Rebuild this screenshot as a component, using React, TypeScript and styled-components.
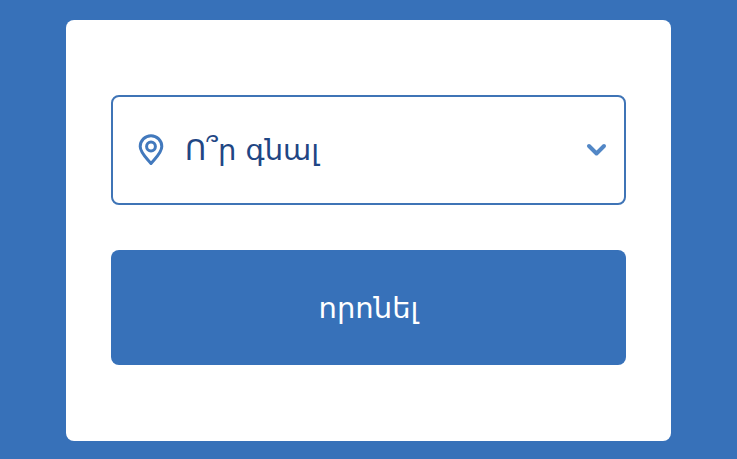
import React from 'react';
import styled, { createGlobalStyle } from 'styled-components';

const GlobalStyle = createGlobalStyle`
  html, body {
    margin: 0;
    padding: 0;
    height: 100%;
    background: #3771b9;
    overflow: hidden;
  }
`;

const Page = styled.main`
  width: 737px;
  height: 459px;
  padding: 20px 66px 18px;
  box-sizing: border-box;
  font-family: 'DejaVu Sans', sans-serif;
`;

const Card = styled.form`
  height: 421px;
  box-sizing: border-box;
  padding: 75px 45px 0;
  background: #fff;
  border-radius: 8px;
  display: grid;
  grid-template-rows: 110px 115px;
  gap: 45px;
  align-content: start;
`;

const Select = styled.div`
  display: flex;
  align-items: center;
  padding: 0 17px 0 25px;
  border: 2px solid #3f74b6;
  border-radius: 8px;
  box-sizing: border-box;
`;

const Label = styled.span`
  flex: 1;
  margin-left: 21px;
  color: #1f4684;
  font-size: 29px;
  line-height: 1;
`;

const SearchButton = styled.button`
  border: 0;
  border-radius: 8px;
  background: #3771b9;
  color: #fff;
  font-family: inherit;
  font-size: 29px;
`;

const PinIcon = () => (
  <svg width="26" height="32" viewBox="0 0 26 32" fill="none" stroke="#4279bd" strokeWidth="3">
    <path d="M13 29.5C8 23.5 2.2 18.5 2.2 12.5a10.8 10.8 0 0 1 21.6 0C23.8 18.5 18 23.5 13 29.5Z" strokeLinejoin="round" />
    <circle cx="13" cy="12.5" r="4.4" />
  </svg>
);

const ChevronIcon = () => (
  <svg width="22" height="14" viewBox="0 0 22 14" fill="none" stroke="#5287c6" strokeWidth="4" strokeLinecap="round" strokeLinejoin="round">
    <path d="M4 3l7.5 7.5L19 3" />
  </svg>
);

export default function App() {
  return (
    <>
      <GlobalStyle />
      <Page>
        <Card>
          <Select>
            <PinIcon />
            <Label>Ո՞ր գնալ</Label>
            <ChevronIcon />
          </Select>
          <SearchButton type="button">որոնել</SearchButton>
        </Card>
      </Page>
    </>
  );
}
